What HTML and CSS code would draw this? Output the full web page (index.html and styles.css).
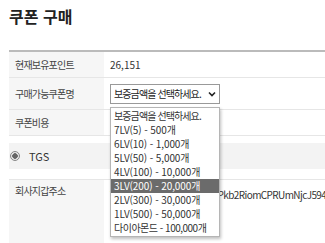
FILE: index.html
```html
<!DOCTYPE html>
<html lang="ko">
<head>
    <meta charset="UTF-8">
    <meta name="viewport" content="width=device-width, initial-scale=1.0">
    <title>쿠폰 구매</title>
    <link rel="stylesheet" href="styles.css">
</head>
<body>
    <div class="page">
        <h1>쿠폰 구매</h1>

        <table class="info-table">
            <tr>
                <th>현재보유포인트</th>
                <td>26,151</td>
            </tr>
            <tr class="select-row">
                <th>구매가능쿠폰명</th>
                <td>
                    <div class="select-wrap">
                        <div class="fake-select">
                            <span class="placeholder">보증금액을 선택하세요.</span>
                            <svg class="chevron" width="8" height="6" viewBox="0 0 8 6">
                                <path d="M1 1.5 L4 4.5 L7 1.5" fill="none" stroke="#222" stroke-width="1.6"/>
                            </svg>
                        </div>
                        <ul class="options">
                            <li class="placeholder">보증금액을 선택하세요.</li>
                            <li>7LV(5) - 500개</li>
                            <li>6LV(10) - 1,000개</li>
                            <li>5LV(50) - 5,000개</li>
                            <li>4LV(100) - 10,000개</li>
                            <li class="active">3LV(200) - 20,000개</li>
                            <li>2LV(300) - 30,000개</li>
                            <li>1LV(500) - 50,000개</li>
                            <li class="hangul">다이아몬드 - 100,000개</li>
                        </ul>
                    </div>
                </td>
            </tr>
            <tr>
                <th>쿠폰비용</th>
                <td></td>
            </tr>
        </table>

        <div class="coin-box">
            <span class="radio"></span>
            <span class="coin-name">TGS</span>
        </div>

        <table class="info-table wallet-table">
            <tr>
                <th>회사지갑주소</th>
                <td class="address">TQmv7hXs3nWdLp8eVaYcPkb2RiomCPRUmNjcJ594Xq8</td>
            </tr>
        </table>
    </div>
</body>
</html>
```

FILE: styles.css
```css
body {
    margin: 0;
    font-family: "Noto Sans CJK KR", "Noto Sans", sans-serif;
    color: #333;
    background: #fff;
    overflow: hidden;
}

.page {
    padding: 6px 0 0 9px;
    width: 340px;
}

h1 {
    font-size: 16px;
    font-weight: bold;
    color: #222;
    margin: 0 0 21px 0;
    height: 23px;
    line-height: 21px;
}

.info-table {
    width: 100%;
    border-collapse: collapse;
    border-top: 2px solid #bbb;
    font-size: 10px;
}

.info-table th,
.info-table td {
    border-bottom: 1px solid #e6e6e6;
    text-align: left;
    padding: 0 6px;
    height: 25px;
}

.info-table th {
    width: 83px;
    background-color: #f6f6f6;
    font-weight: normal;
    color: #444;
    letter-spacing: -0.8px;
}

.info-table td {
    color: #333;
}

.select-row th,
.select-row td {
    height: 31px;
}

.select-wrap {
    position: relative;
    width: 110px;
}

.fake-select {
    display: flex;
    align-items: center;
    justify-content: space-between;
    height: 20px;
    padding: 0 3px 0 3px;
    border: 1px solid #999;
    font-size: 10px;
    color: #222;
    box-sizing: border-box;
}

.options {
    position: absolute;
    top: 23px;
    left: 0;
    width: 110px;
    margin: 0;
    padding: 1px 0;
    list-style: none;
    background: #fff;
    border: 1px solid #b5b5b5;
    box-shadow: 1px 2px 3px rgba(0, 0, 0, 0.25);
    font-size: 10px;
    color: #333;
    z-index: 2;
    box-sizing: border-box;
}

.options li {
    height: 14px;
    line-height: 14px;
    padding: 0 3px;
    white-space: nowrap;
    letter-spacing: -0.1px;
}

.placeholder {
    letter-spacing: -0.9px;
}

.options li.placeholder {
    letter-spacing: -0.9px;
}

.options li.hangul {
    letter-spacing: -0.5px;
}

.options li.active {
    background-color: #6b6b6b;
    color: #fff;
}

.coin-box {
    display: flex;
    align-items: center;
    margin: 7px 0 10px 0;
    height: 26px;
    background-color: #f3f3f3;
    color: #333;
}

.radio {
    width: 8px;
    height: 8px;
    margin-left: 1px;
    border: 1px solid #888;
    border-radius: 50%;
    background: radial-gradient(circle, #666 0, #666 2.5px, #e8e8e8 3px);
}

.coin-name {
    margin-left: 9px;
    font-size: 11px;
}

.wallet-table {
    border-top: 1px solid #e6e6e6;
}

.wallet-table th,
.wallet-table td {
    height: 57px;
    vertical-align: top;
    padding-top: 3px;
}

.wallet-table td.address {
    padding-top: 7px;
    white-space: nowrap;
    letter-spacing: -0.6px;
}
```
